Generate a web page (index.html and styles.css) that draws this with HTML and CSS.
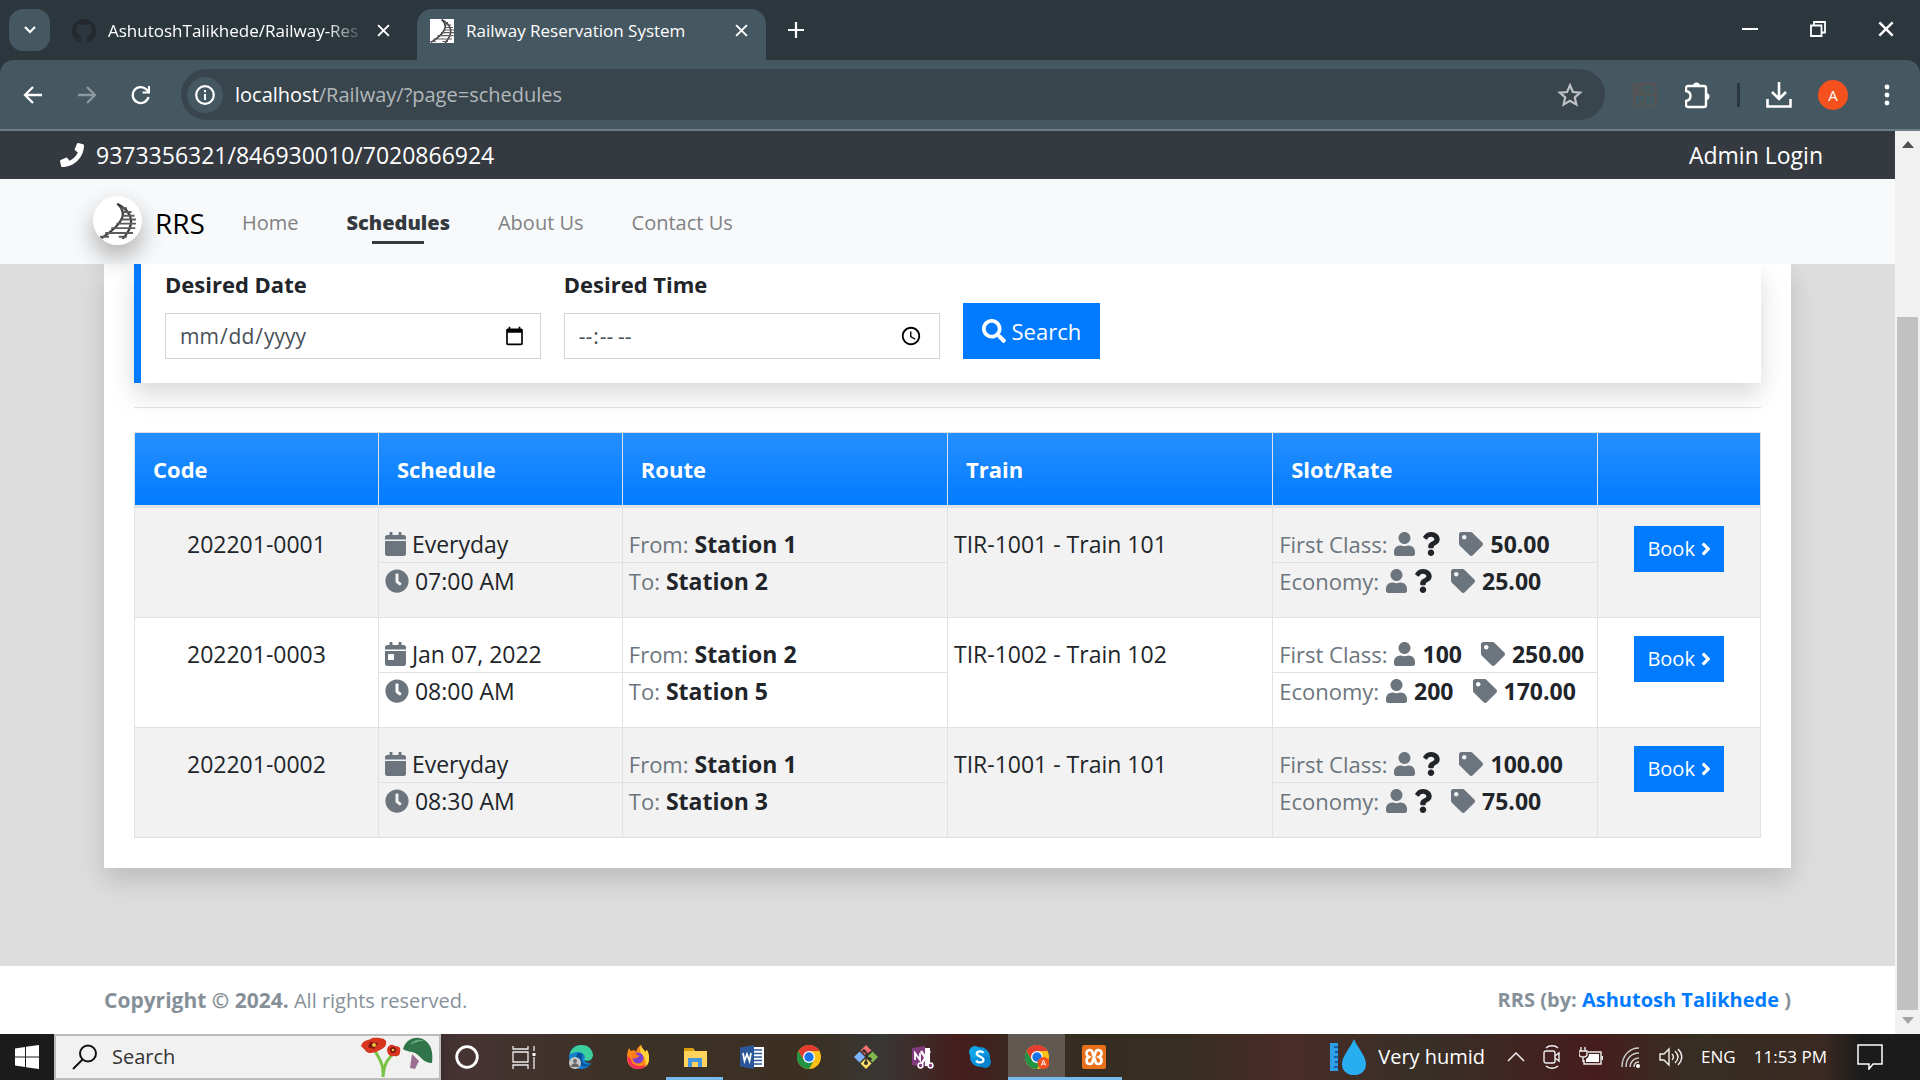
FILE: index.html
```html
<!DOCTYPE html>
<html lang="en">
<head>
<meta charset="utf-8">
<title>Railway Reservation System</title>
<link rel="stylesheet" href="styles.css">
</head>
<body>
<svg class="sprite" aria-hidden="true">
  <symbol id="phone" viewBox="0 0 512 512"><path d="M493.400 24.600l-104-24c-11.300-2.600-22.900 3.300-27.500 13.900l-48 112c-4.200 9.800-1.400 21.300 6.900 28l60.600 49.600c-36 76.700-98.900 140.500-177.200 177.200l-49.600-60.600c-6.800-8.300-18.200-11.100-28-6.900l-112 48C3.900 366.500-2 378.100.6 389.400l24 104C27.100 504.200 36.700 512 48 512c256.100 0 464-207.500 464-464 0-11.200-7.700-20.900-18.600-23.400z"/></symbol>
  <symbol id="calendar" viewBox="0 0 448 512"><path d="M12 192h424c6.600 0 12 5.400 12 12v260c0 26.500-21.500 48-48 48H48c-26.500 0-48-21.500-48-48V204c0-6.600 5.400-12 12-12zm436-44v-36c0-26.500-21.500-48-48-48h-48V12c0-6.600-5.400-12-12-12h-40c-6.600 0-12 5.400-12 12v52H160V12c0-6.600-5.400-12-12-12h-40c-6.600 0-12 5.400-12 12v52H48C21.500 64 0 85.500 0 112v36c0 6.600 5.400 12 12 12h424c6.600 0 12-5.400 12-12z"/></symbol>
  <symbol id="calendar-day" viewBox="0 0 448 512"><path d="M0 464c0 26.500 21.500 48 48 48h352c26.500 0 48-21.500 48-48V192H0v272zm64-192c0-8.800 7.200-16 16-16h96c8.800 0 16 7.200 16 16v96c0 8.800-7.200 16-16 16H80c-8.800 0-16-7.200-16-16v-96zM400 64h-48V16c0-8.800-7.200-16-16-16h-32c-8.800 0-16 7.200-16 16v48H160V16c0-8.800-7.200-16-16-16h-32c-8.800 0-16 7.200-16 16v48H48C21.500 64 0 85.500 0 112v48h448v-48c0-26.500-21.500-48-48-48z"/></symbol>
  <symbol id="clock" viewBox="0 0 512 512"><path d="M256,8C119,8,8,119,8,256S119,504,256,504,504,393,504,256,393,8,256,8Zm92.490,313h0l-20,25a16,16,0,0,1-22.490,2.500h0l-67-49.720a40,40,0,0,1-15-31.230V112a16,16,0,0,1,16-16h32a16,16,0,0,1,16,16V256l58,42.500A16,16,0,0,1,348.490,321Z"/></symbol>
  <symbol id="user" viewBox="0 0 448 512"><path d="M224 256c70.700 0 128-57.300 128-128S294.700 0 224 0 96 57.300 96 128s57.300 128 128 128zm89.600 32h-16.700c-22.200 10.200-46.900 16-72.900 16s-50.600-5.800-72.900-16h-16.700C60.200 288 0 348.200 0 422.400V464c0 26.500 21.500 48 48 48h352c26.500 0 48-21.500 48-48v-41.600c0-74.200-60.200-134.400-134.400-134.400z"/></symbol>
  <symbol id="tag" viewBox="0 0 512 512"><path d="M0 252.118V48C0 21.490 21.490 0 48 0h204.118a48 48 0 0 1 33.941 14.059l211.882 211.882c18.745 18.745 18.745 49.137 0 67.882L293.823 497.941c-18.745 18.745-49.137 18.745-67.882 0L14.059 286.059A48 48 0 0 1 0 252.118zM112 64c-26.510 0-48 21.490-48 48s21.490 48 48 48 48-21.490 48-48-21.490-48-48-48z"/></symbol>
  <symbol id="question" viewBox="0 0 384 512"><path d="M202.021 0C122.202 0 70.503 32.703 29.914 91.026c-7.363 10.580-5.093 25.086 5.178 32.874l43.138 32.709c10.373 7.865 25.132 6.026 33.253-4.148 25.049-31.381 43.630-49.449 82.757-49.449 30.764 0 68.816 19.799 68.816 49.631 0 22.552-18.617 34.134-48.993 51.164-35.423 19.860-82.299 44.576-82.299 106.405V320c0 13.255 10.745 24 24 24h72.471c13.255 0 24-10.745 24-24v-5.773c0-42.860 125.268-44.645 125.268-160.627C377.504 66.256 286.902 0 202.021 0zM192 373.459c-38.196 0-69.271 31.075-69.271 69.271 0 38.195 31.075 69.270 69.271 69.270s69.271-31.075 69.271-69.271-31.075-69.270-69.271-69.270z"/></symbol>
  <symbol id="search" viewBox="0 0 512 512"><path d="M505 442.700L405.300 343c-4.500-4.500-10.600-7-17-7H372c27.600-35.300 44-79.700 44-128C416 93.100 322.900 0 208 0S0 93.100 0 208s93.100 208 208 208c48.300 0 92.700-16.400 128-44v16.300c0 6.400 2.500 12.500 7 17l99.700 99.700c9.400 9.400 24.600 9.400 33.900 0l28.300-28.300c9.400-9.400 9.400-24.600.1-34zM208 336c-70.700 0-128-57.200-128-128 0-70.700 57.200-128 128-128 70.700 0 128 57.200 128 128 0 70.700-57.200 128-128 128z"/></symbol>
  <symbol id="angle" viewBox="0 0 256 512"><path d="M224.300 273l-136 136c-9.400 9.400-24.600 9.400-33.900 0l-22.600-22.600c-9.400-9.400-9.400-24.600 0-33.900l96.400-96.400-96.400-96.400c-9.400-9.400-9.400-24.600 0-33.900L54.300 103c9.400-9.400 24.600-9.400 33.900 0l136 136c9.500 9.400 9.500 24.600.1 34z"/></symbol>
  <symbol id="close" viewBox="0 0 12 12"><path d="M1 1l10 10M11 1L1 11" stroke="currentColor" stroke-width="1.800" fill="none"/></symbol>
  <symbol id="rails" viewBox="0 0 24 24"><path d="M11.500.5C18 6 17 13 1 23.500M11.500.5C22 6 24 14 15 24" fill="none" stroke="#3c3c3c" stroke-width="1.500"/><path d="M13.500 3.500H18M15 6h6M14.500 8.500H23M13.500 11H24M11 13.700h13M7.500 16.700h16M3.500 20H22M0 22.500h6M12.500 22.500h5.500" fill="none" stroke="#5c5c5c" stroke-width="1.200"/></symbol>
  <symbol id="chrome" viewBox="0 0 24 24"><circle cx="12" cy="12" r="12" fill="#fbc116"/><path d="M1.600 6A12 12 0 0 0 12 24L17.200 15H6.800z" fill="#229342"/><path d="M1.600 6A12 12 0 0 1 22.400 6H12L6.800 15z" fill="#e33b2e"/><circle cx="12" cy="12" r="6" fill="#fff"/><circle cx="12" cy="12" r="4.700" fill="#1a73e8"/></symbol>
</svg>

<div class="tabstrip">
  <button class="tabsearch" aria-label="Search tabs"><svg width="12" height="8" viewBox="0 0 12 8"><path d="M1 1l5 5 5-5" fill="none" stroke="#fff" stroke-width="2.200"/></svg></button>
  <div class="tab">
    <svg class="fav" viewBox="0 0 16 16" fill="#23292f"><path d="M8 0C3.580 0 0 3.580 0 8c0 3.540 2.290 6.530 5.470 7.590.4.070.55-.17.55-.38 0-.19-.01-.82-.01-1.490-2.010.37-2.530-.49-2.690-.94-.09-.23-.48-.94-.82-1.130-.28-.15-.68-.52-.01-.53.63-.01 1.080.58 1.230.82.72 1.210 1.870.87 2.330.66.07-.52.28-.87.51-1.070-1.780-.2-3.640-.89-3.640-3.950 0-.87.31-1.590.82-2.150-.08-.2-.36-1.020.08-2.120 0 0 .67-.21 2.200.82.64-.18 1.320-.27 2-.27s1.360.09 2 .27c1.530-1.040 2.200-.82 2.200-.82.44 1.100.16 1.920.08 2.120.51.56.82 1.270.82 2.150 0 3.070-1.870 3.750-3.650 3.950.29.25.54.73.54 1.480 0 1.070-.01 1.930-.01 2.200 0 .21.15.46.55.38A8.010 8.010 0 0 0 16 8c0-4.420-3.580-8-8-8z"/></svg>
    <span class="tabtitle fade">AshutoshTalikhede/Railway-Res</span>
    <button class="icon" aria-label="Close tab"><svg width="13" height="13"><use href="#close"/></svg></button>
  </div>
  <div class="tab active">
    <svg class="fav white" viewBox="0 0 24 24"><use href="#rails"/></svg>
    <span class="tabtitle">Railway Reservation System</span>
    <button class="icon" aria-label="Close tab"><svg width="13" height="13"><use href="#close"/></svg></button>
  </div>
  <button class="icon newtab" aria-label="New tab"><svg width="16" height="16" viewBox="0 0 16 16"><path d="M8 0v16M0 8h16" stroke="#fff" stroke-width="2.200"/></svg></button>
  <div class="wincontrols">
    <button class="icon" aria-label="Minimize"><svg width="16" height="16" viewBox="0 0 16 16"><path d="M0 8h16" stroke="#fff" stroke-width="2"/></svg></button>
    <button class="icon" aria-label="Restore"><svg width="16" height="16" viewBox="0 0 16 16"><path d="M1 4.500h10.500V15H1zM4 4V1h11v10.500h-3" fill="none" stroke="#fff" stroke-width="1.800"/></svg></button>
    <button class="icon" aria-label="Close"><svg width="16" height="16"><use href="#close"/></svg></button>
  </div>
</div>

<div class="toolbar">
  <button class="icon navbtn" aria-label="Back"><svg width="20" height="20" viewBox="0 0 20 20"><path d="M19 10H2M10 2l-8 8 8 8" fill="none" stroke="#fff" stroke-width="2.300"/></svg></button>
  <button class="icon navbtn" aria-label="Forward"><svg width="20" height="20" viewBox="0 0 20 20"><path d="M1 10h17M10 2l8 8-8 8" fill="none" stroke="#8b989e" stroke-width="2.300"/></svg></button>
  <button class="icon navbtn" aria-label="Reload"><svg width="20" height="20" viewBox="0 0 20 20"><path d="M17.500 12A8 8 0 1 1 15.500 4.500L18 7" fill="none" stroke="#fff" stroke-width="2.300"/><path d="M19 1v7.500h-7.500V6.500H17V1z" fill="#fff"/></svg></button>
  <div class="omnibox">
    <button class="siteinfo" aria-label="Site information"><svg width="20" height="20" viewBox="0 0 20 20"><circle cx="10" cy="10" r="8.800" fill="none" stroke="#fff" stroke-width="2.200"/><path d="M10 9v6M10 5v2.200" stroke="#fff" stroke-width="2"/></svg></button>
    <span class="url"><b>localhost</b>/Railway/?page=schedules</span>
    <button class="icon" aria-label="Bookmark"><svg width="26" height="26" viewBox="0 0 24 24"><path d="M12 3l2.700 6.200 6.700.6-5 4.500 1.500 6.600-5.900-3.500-5.900 3.500 1.500-6.600-5-4.500 6.700-.6z" fill="none" stroke="#c0c3c5" stroke-width="2"/></svg></button>
  </div>
  <div class="actions">
    <svg class="extension" width="24" height="24" viewBox="0 0 24 24"><path d="M1 1h22v22H1z" fill="#505556" stroke="#66534e" stroke-width="1"/><path d="M11 4h9v4h-8zM4 14h6v2H4v5h7M13 18h7v-4h-5v7h6" fill="none" stroke="#3f5c66" stroke-width="2"/></svg>
    <button class="icon" aria-label="Extensions"><svg width="26" height="28" viewBox="0 0 26 28"><path d="M3 5h16a2 2 0 0 1 2 2v17a2 2 0 0 1-2 2H3a2 2 0 0 1-2-2v-4c6-1 6-9 0-10V7a2 2 0 0 1 2-2z" fill="none" stroke="#fff" stroke-width="2.400"/><path d="M8 5a3.500 3.500 0 0 1 7 0zM21 12a3.500 3.500 0 0 1 0 7z" fill="#fff"/></svg></button>
    <span class="divider"></span>
    <button class="icon" aria-label="Downloads"><svg width="26" height="26" viewBox="0 0 26 26"><path d="M13 0v17M6 10l7 7 7-7M1.500 17v7.500h23V17" fill="none" stroke="#fff" stroke-width="2.600"/></svg></button>
    <button class="avatar">A</button>
    <button class="icon" aria-label="Menu"><svg width="6" height="22" viewBox="0 0 6 22" fill="#fff"><circle cx="3" cy="3" r="2.400"/><circle cx="3" cy="11" r="2.400"/><circle cx="3" cy="19" r="2.400"/></svg></button>
  </div>
</div>

<div class="viewport">
  <div class="site">
    <div class="topbar">
      <span class="phone"><svg width="24" height="24"><use href="#phone"/></svg>9373356321/846930010/7020866924</span>
      <a href="#login">Admin Login</a>
    </div>
    <nav class="nav">
      <a class="brand" href="#home"><span class="logo"><svg width="36" height="36"><use href="#rails"/></svg></span>RRS</a>
      <a href="#home">Home</a>
      <a class="current" href="#schedules">Schedules</a>
      <a href="#about">About Us</a>
      <a href="#contact">Contact Us</a>
    </nav>
    <main>
      <div class="card">
        <form class="filter">
          <div class="field"><label for="date">Desired Date</label><input id="date" type="date"></div>
          <div class="field"><label for="time">Desired Time</label><input id="time" type="time"></div>
          <div class="field"><button class="primary" type="button"><svg width="24" height="24"><use href="#search"/></svg>Search</button></div>
        </form>
        <hr>
        <table>
          <thead><tr><th class="w15">Code</th><th class="w15">Schedule</th><th class="w20">Route</th><th class="w20">Train</th><th class="w20">Slot/Rate</th><th class="w10"></th></tr></thead>
          <tbody>
            <tr>
              <td class="center"><p>202201-0001</p></td>
              <td><p><svg class="i21"><use href="#calendar"/></svg>Everyday</p><p><svg class="i24"><use href="#clock"/></svg>07:00 AM</p></td>
              <td><p><i>From:</i><b>Station 1</b></p><p><i>To:</i><b>Station 2</b></p></td>
              <td><p>TIR-1001 - Train 101</p></td>
              <td class="slots"><p><i>First Class:</i><svg class="i21"><use href="#user"/></svg><svg class="i18 dark"><use href="#question"/></svg><svg class="i24 rate"><use href="#tag"/></svg><b>50.00</b></p><p><i>Economy:</i><svg class="i21"><use href="#user"/></svg><svg class="i18 dark"><use href="#question"/></svg><svg class="i24 rate"><use href="#tag"/></svg><b>25.00</b></p></td>
              <td class="center"><button class="primary book" type="button">Book<svg width="10" height="20"><use href="#angle"/></svg></button></td>
            </tr>
            <tr>
              <td class="center"><p>202201-0003</p></td>
              <td><p><svg class="i21"><use href="#calendar-day"/></svg>Jan 07, 2022</p><p><svg class="i24"><use href="#clock"/></svg>08:00 AM</p></td>
              <td><p><i>From:</i><b>Station 2</b></p><p><i>To:</i><b>Station 5</b></p></td>
              <td><p>TIR-1002 - Train 102</p></td>
              <td class="slots"><p><i>First Class:</i><svg class="i21"><use href="#user"/></svg><b>100</b><svg class="i24 rate"><use href="#tag"/></svg><b>250.00</b></p><p><i>Economy:</i><svg class="i21"><use href="#user"/></svg><b>200</b><svg class="i24 rate"><use href="#tag"/></svg><b>170.00</b></p></td>
              <td class="center"><button class="primary book" type="button">Book<svg width="10" height="20"><use href="#angle"/></svg></button></td>
            </tr>
            <tr>
              <td class="center"><p>202201-0002</p></td>
              <td><p><svg class="i21"><use href="#calendar"/></svg>Everyday</p><p><svg class="i24"><use href="#clock"/></svg>08:30 AM</p></td>
              <td><p><i>From:</i><b>Station 1</b></p><p><i>To:</i><b>Station 3</b></p></td>
              <td><p>TIR-1001 - Train 101</p></td>
              <td class="slots"><p><i>First Class:</i><svg class="i21"><use href="#user"/></svg><svg class="i18 dark"><use href="#question"/></svg><svg class="i24 rate"><use href="#tag"/></svg><b>100.00</b></p><p><i>Economy:</i><svg class="i21"><use href="#user"/></svg><svg class="i18 dark"><use href="#question"/></svg><svg class="i24 rate"><use href="#tag"/></svg><b>75.00</b></p></td>
              <td class="center"><button class="primary book" type="button">Book<svg width="10" height="20"><use href="#angle"/></svg></button></td>
            </tr>
          </tbody>
        </table>
      </div>
    </main>
    <footer><span><b>Copyright © 2024.</b> All rights reserved.</span><b>RRS (by: <a href="#author">Ashutosh Talikhede</a> )</b></footer>
  </div>
  <div class="scrollbar" aria-hidden="true">
    <svg width="12" height="7" viewBox="0 0 12 7"><path d="M6 0l6 7H0z" fill="#505050"/></svg>
    <div class="track"><div class="thumb"></div></div>
    <svg width="12" height="7" viewBox="0 0 12 7"><path d="M6 7l6-7H0z" fill="#a3a3a3"/></svg>
  </div>
</div>

<div class="taskbar">
  <button class="start" aria-label="Start"><svg width="24" height="24" viewBox="0 0 24 24" fill="#fff"><path d="M0 3.500L10 2v9.500H0zM11 1.800L24 0v11.500H11zM0 12.500h10V22L0 20.500zM11 12.500h13V24l-13-1.800z"/></svg></button>
  <label class="tasksearch">
    <svg width="26" height="26" viewBox="0 0 26 26"><circle cx="16" cy="9.500" r="8" fill="none" stroke="#111" stroke-width="2"/><path d="M10.500 15.500L1 25" stroke="#111" stroke-width="2"/></svg>
    <input type="text" placeholder="Search" aria-label="Search">
    <svg width="74" height="40" viewBox="0 0 74 40"><path d="M14 12c5 10 10 14 9 28M34 16c-6 6-10 10-11 24" fill="none" stroke="#7ac143" stroke-width="3"/><path d="M1 9C3 2 9 4 12 1c5-1 13 0 14 3 1 5-2 7-6 9-6 3-12 5-15 0z" fill="#d7351f"/><path d="M10 5l8 1-4 6-6-2z" fill="#7d1410"/><circle cx="14" cy="8" r="2" fill="#e8c33c"/><path d="M27 12c2-5 5-5 8-3 5 0 6 3 5 6 0 4-3 5-6 4-5 1-7-3-7-7z" fill="#d7351f"/><circle cx="33" cy="13" r="3" fill="#7d1410"/><circle cx="33" cy="13" r="1.300" fill="#e8c33c"/><path d="M52 17l7 7-4 8-5-1z" fill="#9b6f93"/><path d="M43 12C47-1 60-2 67 5c5 5 6 12 5 21-9 0-11-7-17-10-4-2-8-1-12-4z" fill="#2f7549"/><path d="M50 8c4-6 10-6 14-4-6 0-10 2-14 4z" fill="#6da97c"/></svg>
  </label>
  <div class="apps">
    <button class="app" aria-label="Cortana"><svg viewBox="0 0 24 24"><circle cx="12" cy="12" r="10.300" fill="none" stroke="#fff" stroke-width="2.800"/></svg></button>
    <button class="app" aria-label="Task view"><svg viewBox="0 0 24 24" fill="none" stroke="#eee" stroke-width="1.300"><path d="M1 1v3h15V1M1 7h15v10H1zM1 24v-4h15v4M22 1v5M22 12v12"/><path d="M20.500 8h3v3h-3z" fill="#fff" stroke="none"/></svg></button>
    <button class="app" aria-label="Edge"><svg viewBox="0 0 24 24"><circle cx="12" cy="12" r="12" fill="#1680cf"/><path d="M1 9C3-2 22-4 24 10c0 5-5 7-9 5 3-5-2-8-6-8-4 0-6 2-8 2z" fill="#3ccf9c"/><path d="M9 8c-4 4-2 10 4 13 4 1 7 0 9-2-3 1-8 1-9-4-1-3 2-4 0-6-1-1-3-1-4-1z" fill="#08529d"/><path d="M15 15c3 2 8 1 9-4v7c-3 1-7 0-9-3z" fill="#413429"/><circle cx="6" cy="18" r="6" fill="#c8c8c8"/><circle cx="6" cy="16" r="2" fill="#666"/><path d="M2 22c0-5 8-5 8 0z" fill="#666"/></svg></button>
    <button class="app" aria-label="Firefox"><svg viewBox="0 0 24 24"><path d="M3 3l2 3 3-1 2 2c1-4 3-6 5-7 1 4 3 4 4 7l2-2c2 4 2 6 2 9 0 6-5 10-11 10S1 20 1 13c0-5 1-7 2-10z" fill="#ff8a16"/><path d="M15 0c1 4 3 4 4 7l2-2c2 4 2 6 2 9 0 6-4 8-4 8 2-8-1-10-4-13-1-3-1-6 0-9z" fill="#ffd43c"/><path d="M1 11c0 8 5 13 11 13 4 0 7-2 9-5-6 4-16 2-16-5z" fill="#f5315a"/><circle cx="12" cy="13" r="5.500" fill="#7b3fd1"/><path d="M5 8c3-1 5 0 6 2l3 1-4 2c-2 2-5-1-5-5z" fill="#ff7a18"/></svg></button>
    <button class="app open" aria-label="File Explorer"><svg viewBox="0 0 24 24"><path d="M1 3h9l2 3h12v16H1z" fill="#ffd35c"/><path d="M1 3h9l1 3H1z" fill="#dd9c0e"/><path d="M5 22v-9h14v9h-4v-5H9v5z" fill="#4596dc"/></svg></button>
    <button class="app" aria-label="Word"><svg viewBox="0 0 24 24"><path d="M12 2h12v20H12z" fill="#fff"/><path d="M14 5h8M14 8.500h8M14 12h8M14 15.500h8M14 19h8" stroke="#2b579a" stroke-width="1.500"/><path d="M0 2.500L14 0v24L0 21.500z" fill="#2b579a"/><path d="M3 8l1.500 8L7 9l2.500 7L11 8" fill="none" stroke="#fff" stroke-width="1.700"/></svg></button>
    <button class="app" aria-label="Chrome"><svg><use href="#chrome"/></svg></button>
    <button class="app" aria-label="Git"><svg viewBox="0 0 24 24"><path d="M12 0l5.500 5.500L12 11 6.500 5.500z" fill="#f07070"/><path d="M18.500 6.500L24 12l-5.500 5.500L13 12z" fill="#80b84c"/><path d="M5.500 6.500L11 12l-5.500 5.500L0 12z" fill="#80b3ff"/><path d="M12 13l5.500 5.500L12 24l-5.500-5.500z" fill="#ffe06a"/><path d="M12 6v13M12 10l5-3M12 10l4 5" stroke="#332f28" stroke-width="1.500" fill="none"/><circle cx="12" cy="18" r="2" fill="#332f28"/><circle cx="16" cy="14" r="1.800" fill="#332f28"/><circle cx="10" cy="6" r="1.800" fill="#332f28"/></svg></button>
    <button class="app" aria-label="OneNote clipper"><svg viewBox="0 0 24 24"><path d="M1 3l13-2v21L1 20z" fill="#80397b"/><path d="M14 3h5v18h-5z" fill="#fff"/><path d="M4 15V8l5 7V8" fill="none" stroke="#fff" stroke-width="1.800"/><path d="M10 6l8 12M19 6l-8 12" stroke="#fff" stroke-width="2.400"/><circle cx="9.500" cy="20.500" r="2.400" fill="#80397b" stroke="#fff" stroke-width="1.500"/><circle cx="19.500" cy="20.500" r="2.400" fill="#80397b" stroke="#fff" stroke-width="1.500"/></svg></button>
    <button class="app" aria-label="Skype"><svg viewBox="0 0 24 24"><circle cx="12" cy="12" r="10" fill="#0a94dd"/><circle cx="7" cy="7" r="6" fill="#0fa5e8"/><circle cx="17" cy="17" r="6" fill="#0583cf"/><path d="M15.500 8C14 5.500 9 5.800 8.800 8.800 8.800 12 15.500 11 15.500 15 15.300 18.200 9.500 18.200 8.300 15.500" fill="none" stroke="#fff" stroke-width="2.300"/></svg></button>
    <button class="app open active" aria-label="Chrome profile A"><svg viewBox="0 0 24 24"><use href="#chrome" width="24" height="24"/><circle cx="18.500" cy="18" r="6" fill="#f4511e"/><path d="M16.300 20.500l2.200-5.500 2.200 5.500M17 19h3" fill="none" stroke="#fff"/></svg></button>
    <button class="app open" aria-label="XAMPP"><svg viewBox="0 0 24 24"><rect width="24" height="24" rx="2" fill="#e8701a"/><path d="M8 5C4 5 3 10 7 12 3 14 4 19 8 19S10 13 12 13s0 6 4 6 5-5 1-7c4-2 3-7-1-7s-2 6-4 6-0-6-4-6z" fill="none" stroke="#fff" stroke-width="2.600"/></svg></button>
  </div>
  <div class="tray">
    <button class="weather"><svg width="36" height="36" viewBox="0 0 36 36"><path d="M0 4h8v28H0z" fill="#2f9fe8"/><path d="M4 8h4M5 13h3M4 18h4M5 23h3M4 28h4" stroke="#0b4f93" stroke-width="1.500"/><path d="M24 0c3 8 12 17 12 25 0 15-24 15-24 0C12 17 21 8 24 0z" fill="#27aef0"/></svg>Very humid</button>
    <svg width="18" height="10" viewBox="0 0 18 10"><path d="M1 9l8-8 8 8" fill="none" stroke="#eee" stroke-width="1.500"/></svg>
    <svg width="18" height="24" viewBox="0 0 18 24" fill="none" stroke="#eee" stroke-width="1.400"><rect x="1" y="6" width="11" height="12" rx="2"/><path d="M12 11l4-3v8l-4-3M3 3c3-3 9-3 12 0M3 21c3 3 9 3 12 0"/></svg>
    <svg width="24" height="20" viewBox="0 0 24 20" fill="none" stroke="#eee" stroke-width="1.400"><path d="M9 5h13v12H5v-4M23.500 9v4M2 0v4M6 0v4M0 4h8v3c0 4-8 4-8 0zM4 10v5"/><path d="M10 7h10v8H7v-3c2-1 3-3 3-5z" fill="#fff" stroke="none"/></svg>
    <svg width="20" height="22" viewBox="0 0 20 22" fill="none" stroke="#ccc" stroke-width="1.500"><path d="M1 21C1 10 8 2 18 2M5 21C5 13 10 7 18 7M9 21c0-5 4-9 9-9M13 21c0-3 2-5 5-5"/><circle cx="17" cy="20" r="2" fill="#fff" stroke="none"/></svg>
    <svg width="24" height="20" viewBox="0 0 24 20" fill="none" stroke="#eee" stroke-width="1.400"><path d="M1 7h4l5-5v16l-5-5H1zM13 7c2 2 2 4 0 6M16 4c4 4 4 8 0 12M19 2c5 5 5 11 0 16"/></svg>
    <span class="lang">ENG</span>
    <time>11:53 PM</time>
    <svg class="notes" width="26" height="26" viewBox="0 0 26 26" fill="none" stroke="#fff" stroke-width="1.500"><path d="M1 1h24v19H16l-4 5v-5H1z"/></svg>
  </div>
</div>
</body>
</html>
```
FILE: styles.css
```css
* { box-sizing: border-box; }
body {
  margin: 0;
  min-height: 100vh;
  display: flex;
  flex-direction: column;
  font-family: "Open Sans", "Noto Sans", sans-serif;
  font-size: 22px;
  line-height: 36px;
  color: #212529;
  background: #2c373d;
}
button { font: inherit; border: 0; padding: 0; color: inherit; background: none; }
a { color: inherit; text-decoration: none; }
p { margin: 0; }
svg { flex: none; display: block; }
svg:not([fill]) { fill: currentColor; }
.sprite { position: absolute; width: 0; height: 0; }
.icon { display: flex; align-items: center; justify-content: center; }

/* Browser tabs */
.tabstrip { display: flex; height: 60px; padding: 9px 0 0 9px; color: #fff; font-size: 17px; line-height: 24px; }
.tabsearch { display: flex; align-items: center; justify-content: center; width: 41px; height: 42px; border-radius: 14px; background: #455760; }
.tab { display: flex; align-items: center; width: 349px; height: 51px; padding: 0 18px 8px 13px; gap: 12px; margin-left: 9px; }
.tab.active { background: #455760; border-radius: 15px 15px 0 0; }
.fav { width: 24px; height: 24px; }
.white { background: #fff; }
.tabtitle { flex: 1; white-space: nowrap; overflow: hidden; }
.fade { mask-image: linear-gradient(to right, #000 85%, transparent); }
.newtab { width: 60px; height: 42px; }
.wincontrols { display: flex; margin-left: auto; height: 40px; }
.wincontrols .icon { width: 68px; }

/* Address bar */
.toolbar { display: flex; align-items: center; height: 71px; padding: 0 30px 0 23px; background: #455760; border-bottom: 2px solid #6b7d84; border-radius: 14px 14px 0 0; color: #fff; }
.navbtn { width: 20px; margin-right: 34px; }
.omnibox { flex: 1; display: flex; align-items: center; height: 51px; padding: 0 22px 0 6px; border-radius: 26px; background: #39454c; font-size: 20px; line-height: 30px; margin-left: -4px; }
.siteinfo { display: flex; align-items: center; justify-content: center; width: 36px; height: 36px; border-radius: 50%; background: #455760; }
.url { flex: 1; margin-left: 12px; color: #b2b8bb; }
.url b { font-weight: 400; color: #fff; }
.actions { display: flex; align-items: center; gap: 26px; margin-left: 28px; }
.extension { margin-right: 2px; }
.divider { width: 3px; height: 24px; background: #2c373d; }
.avatar { width: 30px; height: 30px; margin-right: 10px; border-radius: 50%; background: #f4511e; font-size: 15px; line-height: 30px; }

/* Page viewport */
.viewport { flex: 1; display: flex; }
.site { flex: 1; display: flex; flex-direction: column; min-width: 0; }
.topbar { display: flex; align-items: center; justify-content: space-between; height: 48px; padding: 0 72px 0 60px; background: #343a40; color: #fff; font-size: 23px; }
.phone { display: flex; align-items: center; gap: 12px; }
.nav { position: relative; z-index: 1; display: flex; align-items: center; height: 85px; padding: 2px 93px 0; gap: 48px; background: #f8f9fa; font-size: 20px; color: #808182; }
.brand { display: flex; align-items: center; gap: 13px; margin-right: -11px; font-size: 28px; color: #000; }
.logo { display: flex; align-items: center; justify-content: center; width: 49px; height: 49px; margin-bottom: 4px; border-radius: 50%; background: #fff; box-shadow: 0 12px 24px rgba(0, 0, 0, .3); }
.current { position: relative; color: #343a40; font-weight: 800; }
.current::after { content: ""; position: absolute; left: 25%; bottom: -3px; width: 50%; height: 3px; background: #343a40; }
main { flex: 1; padding: 0 104px 96px; background: #ddd; }
.card { padding: 0 30px 30px; background: #fff; box-shadow: 0 12px 24px rgba(0, 0, 0, .15); }
.filter { display: grid; grid-template-columns: repeat(4, 1fr); gap: 23px; align-items: end; padding: 2px 24px 24px; border-left: 7px solid #007bff; box-shadow: 0 12px 24px rgba(0, 0, 0, .15); }
.field { display: flex; flex-direction: column; align-items: start; gap: 11px; }
.field label { font-weight: 700; }
.field input { width: 100%; height: 46px; padding: 0 13px; border: 1px solid #ced4da; background: #fff; font: inherit; font-size: 21px; color: #495057; }
.primary { display: flex; align-items: center; gap: 6px; height: 56px; padding: 0 19px; background: #007bff; color: #fff; }
.book { display: inline-flex; height: 46px; padding: 0 13px; font-size: 20px; }
hr { margin: 24px 0; border: 0; border-top: 1px solid #e0e0e0; }

/* Schedule table */
table { width: 100%; border-collapse: collapse; table-layout: fixed; font-size: 23px; }
th, td { border: 1px solid #dee2e6; }
thead { background: linear-gradient(#268fff, #007bff); color: #fff; }
th { padding: 18px; text-align: left; font-size: 22px; font-weight: 700; border-bottom-width: 3px; }
td { padding: 18px 0; vertical-align: top; }
tbody tr:nth-child(odd) { background: #f2f2f2; }
.w10 { width: 10%; }
.w15 { width: 15%; }
.w20 { width: 20%; }
.center { text-align: center; }
.center p { justify-content: center; }
td p { display: flex; align-items: center; gap: 6px; height: 36px; padding: 0 6px; white-space: nowrap; }
td p:first-child:not(:last-child) { height: 37px; border-bottom: 1px solid #dee2e6; }
.slots p { gap: 7px; }
td i { font-style: normal; font-size: 22px; color: #6c757d; }
td p svg { height: 24px; color: #6c757d; }
td p .dark { color: #212529; }
.i18 { width: 18px; }
.i21 { width: 21px; }
.i24 { width: 24px; }
.rate { margin-left: 12px; }

footer { display: flex; align-items: center; justify-content: space-between; height: 69px; padding: 0 104px; border-top: 1px solid #dee2e6; background: #fff; color: #869099; font-size: 20px; }
footer span b { font-size: 21px; }
footer a { color: #007bff; }
.scrollbar { display: flex; flex-direction: column; align-items: center; justify-content: space-between; width: 25px; padding: 10px 2px; background: #f1f1f1; }
.track { flex: 1; display: flex; flex-direction: column; justify-content: end; width: 21px; margin: 7px 0; }
.thumb { height: 80%; background: #c1c1c1; }
.thumb { height: 81%; }

/* Windows taskbar */
.taskbar { display: flex; height: 46px; background: linear-gradient(90deg, #1b1b1b 0, #241f1f 20%, #463433 24%, #3c3126 32%, #3b3022 42%, #383735 46%, #451d1c 50%, #352d23 54%, #382d22 62%, #4a2c26 67%, #383028 74%, #461d1e 83%, #372e23 88%, #3a2922 95%, #1b1b1b 97%); color: #fff; font-size: 17px; }
.start { display: flex; align-items: center; justify-content: center; width: 54px; }
.tasksearch { display: flex; align-items: center; gap: 14px; width: 387px; padding: 0 5px 0 16px; border: 2px solid #bcbcbc; background: #f1f1f1; }
.tasksearch input { flex: 1; min-width: 0; padding: 0; border: 0; background: none; font: inherit; font-size: 20px; }
.tasksearch input::placeholder { color: #333; opacity: 1; }
.apps { display: flex; margin-left: -3px; }
.app { display: flex; align-items: center; justify-content: center; width: 57px; padding-top: 3px; border-bottom: 3px solid transparent; }
.app:first-child { border-bottom: 0; padding-top: 0; }
.app svg { width: 24px; height: 24px; }
.open { border-bottom-color: #76b9ed; }
.app.active { background: #615852; }
.tray { display: flex; align-items: center; gap: 18px; margin-left: auto; padding-right: 37px; }
.weather { display: flex; align-items: center; gap: 12px; margin-right: 4px; font-size: 20px; }
.notes { margin-left: 12px; }
```
